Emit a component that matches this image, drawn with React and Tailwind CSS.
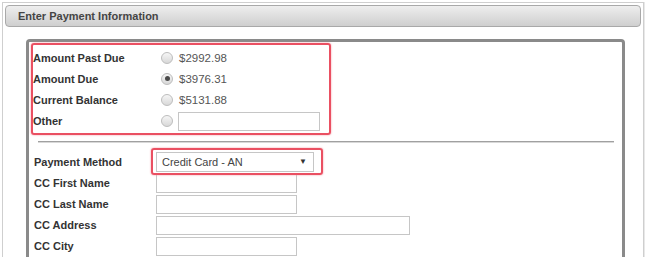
const AMOUNTS = [
  { label: 'Amount Past Due', value: '$2992.98' },
  { label: 'Amount Due', value: '$3976.31', checked: true },
  { label: 'Current Balance', value: '$5131.88' },
]

const CC_FIELDS = [
  { label: 'CC First Name', width: 'w-[141px]' },
  { label: 'CC Last Name', width: 'w-[141px]' },
  { label: 'CC Address', width: 'w-[254px]' },
  { label: 'CC City', width: 'w-[141px]' },
]

function Radio({ checked }) {
  return (
    <span className="w-[12px] h-[12px] rounded-full border border-[#bdbdbd] bg-gradient-to-b from-[#f6f6f6] to-[#d8d8d8] flex items-center justify-center -translate-y-[1px] shrink-0">
      {checked && <span className="w-[5px] h-[5px] rounded-full bg-[#4a4a4a]" />}
    </span>
  )
}

export default function App() {
  return (
    <div
      className="w-[647px] h-[257px] overflow-hidden bg-white pt-[2px] pl-[2px]"
      style={{ fontFamily: '"Liberation Sans", Arial, sans-serif' }}
    >
      <div className="w-[642px] h-[300px] border border-[#cfcfcf] px-[2px] pt-[2px] shadow-[1px_0_0_#e8e8e8]">
        {/* header bar */}
        <div className="h-[22px] rounded-[4px] border border-[#a9a9a9] bg-gradient-to-b from-[#eeeeee] to-[#cfcfcf] flex items-center pl-[12px]">
          <span className="text-[11px] font-bold text-[#454545]">Enter Payment Information</span>
        </div>

        <div className="pl-[21px] pt-[12px]">
          <div className="w-[599px] h-[260px] border-[3px] border-b-0 border-[#8a8a8a] rounded-t-[4px]">
            {/* amount selection */}
            <div className="ml-[2px] mt-[1px] w-[300px] h-[92px] border-2 border-[#ea5062] shadow-[0_0_2px_#f3909b] rounded-[3px] pt-[3px]">
              {AMOUNTS.map(a => (
                <div key={a.label} className="h-[21px] flex items-center">
                  <span className="w-[128px] text-[11px] font-bold text-[#333]">{a.label}</span>
                  <Radio checked={a.checked} />
                  <span className="ml-[6px] text-[11.5px] text-[#555]">{a.value}</span>
                </div>
              ))}
              <div className="h-[21px] flex items-center">
                <span className="w-[128px] text-[11px] font-bold text-[#333]">Other</span>
                <Radio />
                <input
                  type="text"
                  className="ml-[5px] w-[142px] h-[19px] border border-[#c6c6c6] bg-white outline-none"
                />
              </div>
            </div>

            <div className="ml-[9px] mr-[8px] mt-[6px] border-t border-b border-t-[#a0a0a0] border-b-[#d8d8d8]" />

            {/* payment method */}
            <div className="pl-[5px] mt-[9px] flex flex-col gap-[2px]">
              <div className="h-[20px] flex items-center">
                <span className="w-[122px] text-[11px] font-bold text-[#333]">Payment Method</span>
                <div className="relative">
                  <div className="w-[158px] h-[20px] border border-[#c6c6c6] bg-white flex items-center justify-between pl-[5px] pr-[6px]">
                    <span className="text-[11px] text-[#444]">Credit Card - AN</span>
                    <span className="text-[8px] text-[#333]">▼</span>
                  </div>
                  <div className="absolute -left-[5px] -right-[9px] -top-[4px] -bottom-[3px] border-2 border-[#ea5062] shadow-[0_0_2px_#f3909b] rounded-[3px]" />
                </div>
              </div>
              {CC_FIELDS.map(f => (
                <div key={f.label} className="h-[19px] flex items-center">
                  <span className="w-[122px] text-[11px] font-bold text-[#333]">{f.label}</span>
                  <input
                    type="text"
                    className={`${f.width} h-[19px] border border-[#c6c6c6] bg-white outline-none`}
                  />
                </div>
              ))}
            </div>
          </div>
        </div>
      </div>
    </div>
  )
}
